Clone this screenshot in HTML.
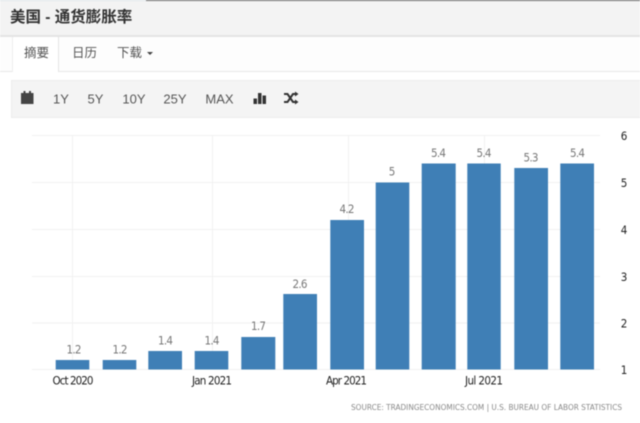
<!DOCTYPE html>
<html><head><meta charset="utf-8"><style>
html,body{margin:0;padding:0;background:#fff}
#p{position:relative;width:640px;height:423px;overflow:hidden;background:#fff;font-family:"Liberation Sans","Noto Sans CJK SC",sans-serif;filter:blur(.45px)}
#p div{position:absolute}
.t{white-space:nowrap;color:#555}
</style></head><body><div id="p">
<div style="left:146px;top:0;width:494px;height:1px;background:#666"></div>
<div style="left:0;top:0;width:146px;height:1px;background:#dfe6ea"></div>
<div style="left:0;top:1px;width:640px;height:34px;background:#f3f3f3"></div>
<div style="left:0;top:35px;width:640px;height:2px;background:#e4e4e4"></div>
<div class="t" style="left:10px;top:8px;font-size:15.500px;line-height:20px;font-weight:bold;color:#333">美国 - 通货膨胀率</div>
<div style="left:0;top:37px;width:640px;height:34px;background:#fdfdfd"></div>
<div style="left:0;top:71px;width:640px;height:1px;background:#e8e8e8"></div>
<div style="left:12px;top:37px;width:45px;height:35px;background:#fff;border-left:1px solid #eee;border-right:1px solid #e4e4e4"></div>
<div class="t" style="left:24px;top:44px;font-size:12.500px;line-height:18px">摘要</div>
<div class="t" style="left:72px;top:44px;font-size:12.500px;line-height:18px">日历</div>
<div class="t" style="left:117px;top:44px;font-size:12.500px;line-height:18px">下载</div>
<div style="left:147px;top:52px;width:0;height:0;border-left:3.500px solid transparent;border-right:3.500px solid transparent;border-top:3.500px solid #444"></div>
<div style="left:11px;top:80px;width:629px;height:38px;background:#f4f4f4;border-top:1px solid #ececec;border-left:1px solid #ececec;border-bottom:1px solid #ececec;box-sizing:border-box"></div>
<svg style="position:absolute;left:0;top:0" width="640" height="423" viewBox="0 0 640 423">
<path d="M21 93h12.500v11h-12.500z" fill="#444"/>
<path d="M23.500 91h2v2h-2zM29 91h2v2h-2z" fill="#444"/>
<path d="M253.500 98.500h3.500v5.500h-3.500zM258 93h3.500v11h-3.500zM262.500 95.500h3.500v8.500h-3.500z" fill="#333"/>
<path d="M284 94h3.500l5.500 8h3M284 102h3.500l5.500-8h3" fill="none" stroke="#333" stroke-width="2"/>
<path d="M295 91.500l3.500 2.500-3.500 2.500zM295 99.500l3.500 2.500-3.500 2.500z" fill="#333"/>
<g font-family="'Liberation Sans',sans-serif" font-size="13" fill="#555" text-anchor="middle">
<text x="61" y="103.500">1Y</text><text x="95.500" y="103.500">5Y</text><text x="134" y="103.500">10Y</text><text x="175" y="103.500">25Y</text><text x="219.500" y="103.500">MAX</text>
</g>
<g stroke="#f1f1f1" stroke-width="1" fill="none">
<path d="M32 135.500H600M32 182.500H600M32 229.500H600M32 276.500H600M32 323H600M32 369.500H600"/>
<path d="M72.500 135V370M212.500 135V370M348.500 135V370M484.500 135V370"/>
</g>
<g fill="#3f7fb6">
<rect x="55.700" y="360" width="33.600" height="9.500"/>
<rect x="102.700" y="360" width="33.600" height="9.500"/>
<rect x="148.300" y="351" width="33.700" height="18.500"/>
<rect x="194.700" y="351" width="33.600" height="18.500"/>
<rect x="241.300" y="337" width="34" height="32.500"/>
<rect x="283.300" y="294" width="33.700" height="75.500"/>
<rect x="330.300" y="220" width="33.700" height="149.500"/>
<rect x="375.700" y="182.500" width="33.600" height="187"/>
<rect x="421.700" y="163.500" width="34" height="206"/>
<rect x="467.300" y="163.500" width="33.400" height="206"/>
<rect x="514.300" y="168" width="33.700" height="201.500"/>
<rect x="560.300" y="163.500" width="33.700" height="206"/>
</g>
<g font-family="'DejaVu Sans',sans-serif" font-size="11.500" fill="#777" text-anchor="middle" style="font-stretch:condensed">
<text x="74" y="353.500" textLength="15">1.2</text><text x="120" y="353.500" textLength="15">1.2</text><text x="165.500" y="344.500" textLength="15">1.4</text><text x="212" y="344.500" textLength="15">1.4</text><text x="258.500" y="330" textLength="15">1.7</text><text x="300" y="288" textLength="15">2.6</text><text x="347" y="213" textLength="15">4.2</text><text x="392" y="175.500">5</text><text x="438.500" y="157" textLength="15">5.4</text><text x="484" y="157" textLength="15">5.4</text><text x="531" y="161.500" textLength="15">5.3</text><text x="577.500" y="157" textLength="15">5.4</text>
</g>
<g font-family="'DejaVu Sans',sans-serif" font-size="11.500" fill="#222" text-anchor="middle" style="font-stretch:condensed">
<text x="624" y="140">6</text><text x="624" y="187">5</text><text x="624" y="234">4</text><text x="624" y="281">3</text><text x="624" y="327.500">2</text><text x="624" y="374">1</text>
<text x="73" y="384.500" textLength="41">Oct 2020</text><text x="212" y="384.500" textLength="40">Jan 2021</text><text x="346.500" y="384.500" textLength="41">Apr 2021</text><text x="484" y="384.500" textLength="38">Jul 2021</text>
</g>
<text x="351" y="410" font-family="'DejaVu Sans',sans-serif" font-size="7.500" fill="#888" textLength="271" lengthAdjust="spacingAndGlyphs">SOURCE: TRADINGECONOMICS.COM | U.S. BUREAU OF LABOR STATISTICS</text>
</svg>
</div></body></html>
